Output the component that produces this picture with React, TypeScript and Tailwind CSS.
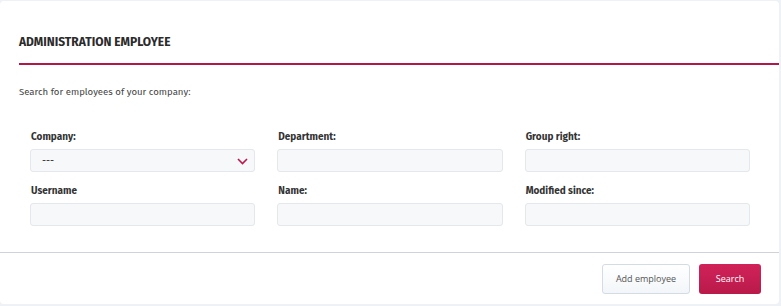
import React from "react";

const Field = ({ label, select }: { label: string; select?: boolean }) => (
  <div className="flex flex-col">
    <label className="text-[10px] font-bold text-[#333] leading-[12px] mb-[6px] pl-px">{label}</label>
    <div className="relative h-[23px] rounded-[3px] border border-[#e4e7eb] bg-[#f7f8fa] flex items-center">
      {select && (
        <>
          <span className="pl-[11px] text-[10px] text-[#333] leading-none">---</span>
          <svg className="absolute right-[6px] top-[8px]" width="11" height="7" viewBox="0 0 11 7" fill="none">
            <path d="M1 1l4.5 4.5L10 1" stroke="#c0174a" strokeWidth="1.6" />
          </svg>
        </>
      )}
    </div>
  </div>
);

export default function App() {
  return (
    <div className="w-[781px] h-[306px] bg-[#eef1f5] pt-px pr-[2px] pb-[2px]" style={{ fontFamily: "'Fira Sans', Lato, 'Noto Sans', sans-serif" }}>
      <div className="h-full bg-white rounded-[4px] flex flex-col">
        <div className="pl-[19px] pt-[34px]">
          <h1 className="text-[12px] font-bold text-[#2b2b2b] leading-[14px]">ADMINISTRATION EMPLOYEE</h1>
          <div className="mt-[14px] h-[2px] bg-[#b3174a]" />
          <p className="mt-[21px] text-[9.6px] text-[#444] leading-[12px]">Search for employees of your company:</p>
        </div>
        <div className="mt-[33px] px-[30px] grid grid-cols-3 gap-x-[22px] gap-y-[13px] pr-[29px]">
          <Field label="Company:" select />
          <Field label="Department:" />
          <Field label="Group right:" />
          <Field label="Username" />
          <Field label="Name:" />
          <Field label="Modified since:" />
        </div>
        <div className="mt-[26px] border-t border-[#cfd3d8] flex-1 flex justify-end items-start pt-[11px] pr-[18px] gap-[9px]" style={{ fontFamily: "'Open Sans', sans-serif" }}>
          <button className="h-[30px] w-[88px] rounded-[3px] border border-[#d3dbe5] bg-gradient-to-b from-white to-[#f3f6f9] text-[9px] text-[#555]">Add employee</button>
          <button className="h-[30px] w-[62px] rounded-[3px] bg-gradient-to-b from-[#d1225a] to-[#b91a4a] text-[9px] text-white">Search</button>
        </div>
      </div>
    </div>
  );
}
